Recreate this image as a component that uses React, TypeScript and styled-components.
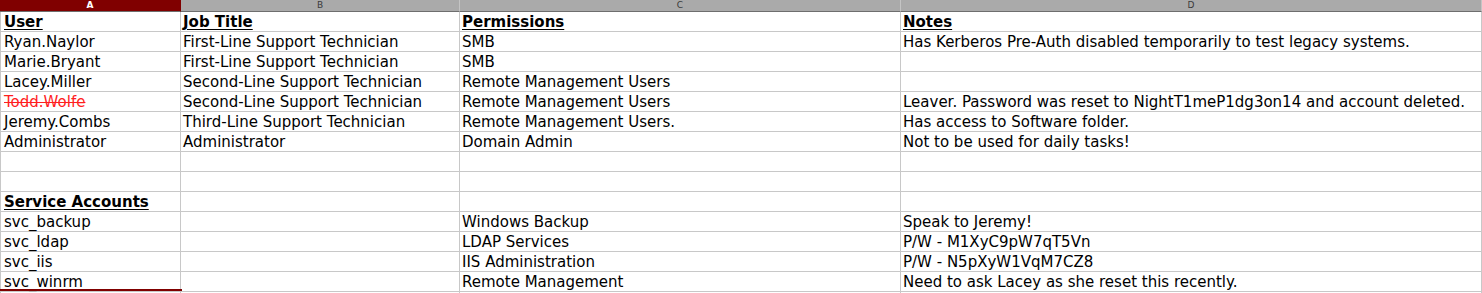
import React from "react";
import styled, { createGlobalStyle } from "styled-components";

const GlobalStyle = createGlobalStyle`
  html, body {
    margin: 0;
    padding: 0;
    background: #ffffff;
    overflow: hidden;
  }
  body {
    font-family: "DejaVu Sans", "Liberation Sans", sans-serif;
  }
`;

const Sheet = styled.div`
  display: grid;
  grid-template-columns: 181px 279px 441px 1fr;
  width: 1482px;
  height: 293px;
  overflow: hidden;
`;

const ColHeader = styled.div<{ $active?: boolean }>`
  height: 11px;
  border-bottom: 1px solid #6e6e6e;
  border-right: 1px solid ${(p) => (p.$active ? "#800000" : "#c4c4c4")};
  background: ${(p) => (p.$active ? "#800000" : "#aaaaaa")};
  color: ${(p) => (p.$active ? "#ffffff" : "#3a3a3a")};
  font-size: 9px;
  font-weight: ${(p) => (p.$active ? 700 : 400)};
  line-height: 10px;
  text-align: center;
  overflow: hidden;
`;

const Cell = styled.div<{ $first?: boolean; $head?: boolean; $gone?: boolean; $selected?: boolean }>`
  position: relative;
  height: 19px;
  border-bottom: 1px solid #c8c8c8;
  border-right: 1px solid #c8c8c8;
  border-left: ${(p) => (p.$first ? "1px solid #c8c8c8" : "none")};
  padding-left: ${(p) => (p.$first ? "3px" : "2px")};
  font-size: 15px;
  line-height: 20px;
  white-space: nowrap;
  overflow: visible;
  color: ${(p) => (p.$gone ? "#ff1f1f" : "#000000")};
  font-weight: ${(p) => (p.$head ? 700 : 400)};
  text-decoration: ${(p) => (p.$head ? "underline" : p.$gone ? "line-through" : "none")};
  text-underline-offset: 2px;

  ${(p) =>
    p.$selected &&
    `
    &::before {
      content: "";
      position: absolute;
      left: -1px;
      top: -3px;
      width: 182px;
      height: 2px;
      background: #800000;
    }
  `}
`;

type Row = {
  cells: [string, string, string, string];
  head?: boolean;
  gone?: boolean;
  selected?: boolean;
};

const rows: Row[] = [
  { cells: ["User", "Job Title", "Permissions", "Notes"], head: true },
  {
    cells: [
      "Ryan.Naylor",
      "First-Line Support Technician",
      "SMB",
      "Has Kerberos Pre-Auth disabled temporarily to test legacy systems.",
    ],
  },
  { cells: ["Marie.Bryant", "First-Line Support Technician", "SMB", ""] },
  { cells: ["Lacey.Miller", "Second-Line Support Technician", "Remote Management Users", ""] },
  {
    cells: [
      "Todd.Wolfe",
      "Second-Line Support Technician",
      "Remote Management Users",
      "Leaver. Password was reset to NightT1meP1dg3on14 and account deleted.",
    ],
    gone: true,
  },
  {
    cells: [
      "Jeremy.Combs",
      "Third-Line Support Technician",
      "Remote Management Users.",
      "Has access to Software folder.",
    ],
  },
  { cells: ["Administrator", "Administrator", "Domain Admin", "Not to be used for daily tasks!"] },
  { cells: ["", "", "", ""] },
  { cells: ["", "", "", ""] },
  { cells: ["Service Accounts", "", "", ""], head: true },
  { cells: ["svc_backup", "", "Windows Backup", "Speak to Jeremy!"] },
  { cells: ["svc_ldap", "", "LDAP Services", "P/W - M1XyC9pW7qT5Vn"] },
  { cells: ["svc_iis", "", "IIS Administration", "P/W - N5pXyW1VqM7CZ8"] },
  { cells: ["svc_winrm", "", "Remote Management", "Need to ask Lacey as she reset this recently."] },
  { cells: ["", "", "", ""], selected: true },
];

const columns = ["A", "B", "C", "D"];

export default function App() {
  return (
    <>
      <GlobalStyle />
      <Sheet>
        {columns.map((c, i) => (
          <ColHeader key={c} $active={i === 0}>
            {c}
          </ColHeader>
        ))}
        {rows.map((row, r) =>
          row.cells.map((text, i) => (
            <Cell
              key={`${r}-${i}`}
              $first={i === 0}
              $head={row.head && text !== ""}
              $gone={row.gone && i === 0}
              $selected={row.selected && i === 0}
            >
              {text}
            </Cell>
          ))
        )}
      </Sheet>
    </>
  );
}
